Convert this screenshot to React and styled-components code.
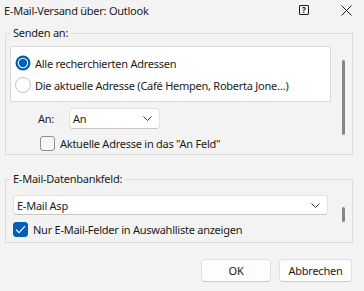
import React from "react";
import styled, { createGlobalStyle } from "styled-components";

const Global = createGlobalStyle`
  html, body {
    margin: 0;
    padding: 0;
    background: #f3f3f3;
  }
  body {
    font-family: "Noto Sans", "Open Sans", sans-serif;
    font-size: 11px;
    letter-spacing: -0.25px;
    color: #1b1b1b;
  }
`;

export default function App() {
  return (
    <>
      <Global />
      <Window>
        <TitleBar>
          <Title>E-Mail-Versand über: Outlook</Title>
          <TitleButtons>
            <HelpIcon>?</HelpIcon>
            <svg width="11" height="11" viewBox="0 0 11 11">
              <path d="M0.5 0.5 L10.5 10.5 M10.5 0.5 L0.5 10.5" stroke="#1b1b1b" strokeWidth="1" fill="none" />
            </svg>
          </TitleButtons>
        </TitleBar>

        <Group $top={5} $pad="5px 7px 3px 4px">
          <Legend>Senden an:</Legend>
          <GroupBody>
            <Main>
              <ListBox>
                <RadioRow>
                  <Radio checked />
                  <span>Alle recherchierten Adressen</span>
                </RadioRow>
                <RadioRow>
                  <Radio />
                  <span>Die aktuelle Adresse (Café Hempen, Roberta Jone…)</span>
                </RadioRow>
              </ListBox>
              <FieldRow>
                <FieldLabel>An:</FieldLabel>
                <Select $width={91} $height={21}>
                  <span>An</span>
                  <Chevron />
                </Select>
              </FieldRow>
              <CheckRow $indent={30} $gap={5}>
                <Check />
                <span>Aktuelle Adresse in das "An Feld"</span>
              </CheckRow>
            </Main>
            <ScrollThumb $top={14} $height={75} />
          </GroupBody>
        </Group>

        <Group $top={16} $pad="8px 7px 5px 4px">
          <Legend>E-Mail-Datenbankfeld:</Legend>
          <GroupBody>
            <Main $inset={3}>
              <Select $height={20}>
                <span>E-Mail Asp</span>
                <Chevron />
              </Select>
              <CheckRow $indent={0} $gap={5}>
                <Check checked />
                <span>Nur E-Mail-Felder in Auswahlliste anzeigen</span>
              </CheckRow>
            </Main>
            <ScrollThumb $top={12} $height={15} />
          </GroupBody>
        </Group>

        <Footer>
          <Button $width={70}>OK</Button>
          <Button $width={73}>Abbrechen</Button>
        </Footer>
      </Window>
    </>
  );
}

function Radio({ checked }) {
  return (
    <RadioMark width="16" height="16" viewBox="0 0 16 16">
      {checked ? (
        <>
          <circle cx="8" cy="8" r="7.5" fill="#005fb8" />
          <circle cx="8" cy="8" r="5.2" fill="#ffffff" />
          <circle cx="8" cy="8" r="4.2" fill="#005fb8" />
        </>
      ) : (
        <circle cx="8" cy="8" r="7.5" fill="#ffffff" stroke="#c4c4c4" strokeWidth="1" />
      )}
    </RadioMark>
  );
}

function Check({ checked }) {
  return (
    <CheckBox $checked={checked}>
      {checked && (
        <svg width="11" height="9" viewBox="0 0 11 9">
          <path d="M1 4.6 L4 7.6 L10 1.2" stroke="#ffffff" strokeWidth="1.2" fill="none" />
        </svg>
      )}
    </CheckBox>
  );
}

function Chevron() {
  return (
    <svg width="9" height="5" viewBox="0 0 9 5">
      <path d="M0.5 0.5 L4.5 4.5 L8.5 0.5" stroke="#333333" strokeWidth="1" fill="none" />
    </svg>
  );
}

const Window = styled.div`
  display: flex;
  flex-direction: column;
  width: 364px;
  height: 291px;
  box-sizing: border-box;
`;

const TitleBar = styled.div`
  display: flex;
  align-items: center;
  justify-content: space-between;
  height: 20px;
  padding: 0 12px 0 4px;
`;

const Title = styled.div`
  font-size: 11px;
`;

const TitleButtons = styled.div`
  display: flex;
  align-items: center;
  gap: 32px;
`;

const HelpIcon = styled.span`
  display: flex;
  align-items: center;
  justify-content: center;
  width: 8px;
  height: 8px;
  border: 1px solid #1b1b1b;
  border-radius: 1px;
  font-size: 8px;
  font-weight: bold;
  letter-spacing: 0;
  line-height: 1;
`;

const Group = styled.fieldset`
  margin: ${(p) => p.$top}px 11px 0 5px;
  padding: ${(p) => p.$pad};
  border: 1px solid #dcdcdc;
  min-width: 0;
`;

const Legend = styled.legend`
  padding: 0 3px;
  line-height: 16px;
  font-size: 11px;
`;

const GroupBody = styled.div`
  display: grid;
  grid-template-columns: 1fr 3px;
  column-gap: 11px;
  align-items: start;
`;

const Main = styled.div`
  display: flex;
  flex-direction: column;
  padding: 0 ${(p) => p.$inset || 0}px;
`;

const ScrollThumb = styled.div`
  margin-top: ${(p) => p.$top}px;
  height: ${(p) => p.$height}px;
  border-radius: 2px;
  background: #868686;
`;

const ListBox = styled.div`
  display: flex;
  flex-direction: column;
  padding: 5px 4px;
  background: #ffffff;
  border: 1px solid #d9d9d9;
`;

const RadioRow = styled.label`
  display: flex;
  align-items: center;
  gap: 4px;
  height: 22px;
`;

const RadioMark = styled.svg`
  flex: none;
`;

const FieldRow = styled.div`
  display: flex;
  align-items: center;
  margin-top: 6px;
  padding-left: 28px;
`;

const FieldLabel = styled.span`
  width: 31px;
`;

const Select = styled.div`
  display: flex;
  align-items: center;
  justify-content: space-between;
  box-sizing: border-box;
  width: ${(p) => (p.$width ? `${p.$width}px` : "100%")};
  height: ${(p) => p.$height}px;
  padding: 0 7px 0 3px;
  background: #ffffff;
  border: 1px solid #e3e3e3;
  border-bottom-color: #c6c6c6;
  border-radius: 4px;
`;

const CheckRow = styled.label`
  display: flex;
  align-items: center;
  gap: ${(p) => p.$gap}px;
  margin-top: 7px;
  padding-left: ${(p) => p.$indent}px;
`;

const CheckBox = styled.span`
  display: flex;
  align-items: center;
  justify-content: center;
  flex: none;
  box-sizing: border-box;
  width: 15px;
  height: 15px;
  border-radius: 3px;
  background: ${(p) => (p.$checked ? "#005fb8" : "#f7f7f7")};
  border: 1px solid ${(p) => (p.$checked ? "#005fb8" : "#8f8f8f")};
`;

const Footer = styled.div`
  display: flex;
  justify-content: flex-end;
  gap: 8px;
  padding: 16px 12px 0 0;
`;

const Button = styled.button`
  width: ${(p) => p.$width}px;
  height: 23px;
  padding: 0;
  font-family: inherit;
  font-size: 11px;
  letter-spacing: inherit;
  color: #1b1b1b;
  background: #fdfdfd;
  border: 1px solid #e0e0e0;
  border-bottom-color: #cccccc;
  border-radius: 4px;
`;
